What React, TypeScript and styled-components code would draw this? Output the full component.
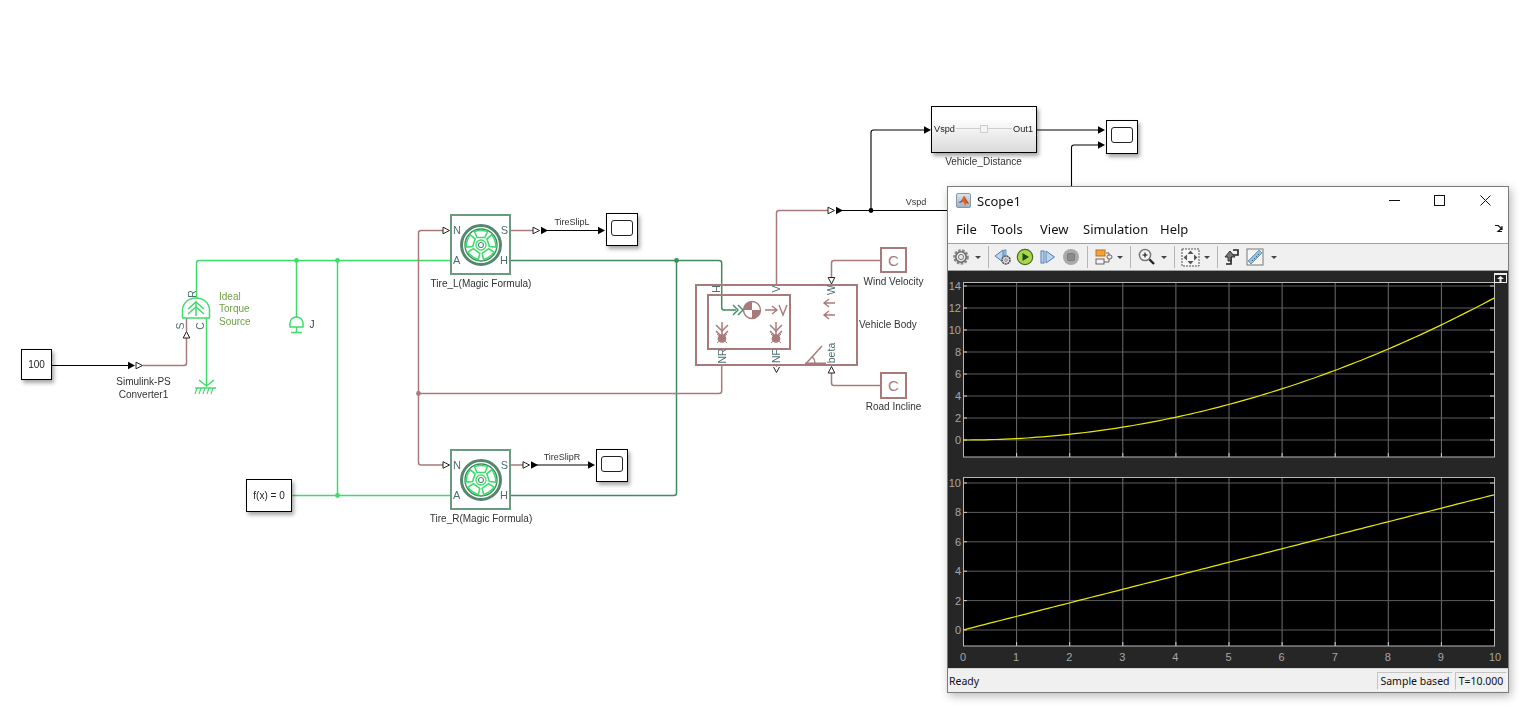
import React from "react";
import styled, { createGlobalStyle } from "styled-components";

// Colours
const BROWN = "#a97a7a";
const GREEN = "#3fdc6c";
const DARK_GREEN = "#3f8c60";
const PORT_TEXT = "#4f6f70";

const GlobalStyle = createGlobalStyle`
  html, body {
    margin: 0;
    background: #fff;
  }
`;

// Canvas
const Canvas = styled.div`
  position: relative;
  width: 1538px;
  height: 716px;
  overflow: hidden;
  background: #fff;
  font-family: "Liberation Sans", Arial, sans-serif;
`;

// the model sheet is soft in the screenshot, the scope window is not
const ModelSheet = styled.div`
  position: absolute;
  inset: 0;
  filter: blur(0.3px);
`;

const WireLayer = styled.svg`
  position: absolute;
  left: 0;
  top: 0;
  width: 1538px;
  height: 716px;
`;

const Wire = styled.path<{ $c?: string; $w?: number }>`
  fill: none;
  stroke: ${(p) => p.$c || "#000"};
  stroke-width: ${(p) => p.$w || 1.5};
`;

const SignalWire = styled(Wire)`
  stroke-width: 1.1;
`;

const DiagramLabel = styled.div<{ $x: number; $y: number; $color?: string; $rot?: boolean; $size?: number }>`
  position: absolute;
  left: ${(p) => p.$x}px;
  top: ${(p) => p.$y}px;
  transform: translate(-50%, -50%) ${(p) => (p.$rot ? "rotate(-90deg)" : "")};
  color: ${(p) => p.$color || "#333"};
  font-size: ${(p) => p.$size || 10}px;
  line-height: 12.5px;
  text-align: center;
  white-space: nowrap;
`;

const LeftLabel = styled(DiagramLabel)`
  transform: translateY(-50%);
  text-align: left;
`;

const Node = styled.div<{ $x: number; $y: number; $w: number; $h: number }>`
  position: absolute;
  left: ${(p) => p.$x}px;
  top: ${(p) => p.$y}px;
  width: ${(p) => p.$w}px;
  height: ${(p) => p.$h}px;
  box-sizing: border-box;
  display: flex;
  align-items: center;
  justify-content: center;
`;

const SimBlock = styled(Node)`
  background: #fff;
  border: 1.5px solid #000;
  box-shadow: 2px 3px 4px rgba(0, 0, 0, 0.35);
  font-size: 10px;
  color: #222;
`;

const ScopeScreen = styled.div`
  width: 20px;
  height: 14px;
  margin-bottom: 4px;
  border: 1.5px solid #222;
  border-radius: 3px;
  background: #fff;
`;

const SubsystemBlock = styled(SimBlock)`
  justify-content: flex-start;
  gap: 1px;
  padding: 0 3px 2px 2px;
  background: linear-gradient(#ffffff 25%, #dadada);
  font-size: 9.2px;
`;

const SliderTrack = styled.div`
  flex: 1;
  height: 1px;
  background: #cfcfcf;
  display: flex;
  align-items: center;
  justify-content: center;
`;

const SliderThumb = styled.div`
  width: 6px;
  height: 6px;
  background: #f4f4f4;
  border: 1px solid #cdcdcd;
`;

const TireBlock = styled(Node)`
  background: #fff;
  border: 2px solid #6a9a80;
`;

const TirePort = styled.span<{ $left?: boolean; $low?: boolean }>`
  position: absolute;
  ${(p) => (p.$left ? "left: 1px;" : "right: 1px;")}
  top: ${(p) => (p.$low ? 38 : 8)}px;
  font-size: 11px;
  line-height: 12px;
  color: ${PORT_TEXT};
`;

const ConstantBlock = styled(Node)`
  background: #fff;
  border: 2px solid ${BROWN};
  color: ${BROWN};
  font-size: 15px;
`;

const BodyFrame = styled(Node)`
  border: 2px solid ${BROWN};
  justify-content: flex-start;
  align-items: flex-start;
  padding: 8px 0 0 10px;
`;

const BodyInner = styled.div`
  width: 84px;
  height: 56px;
  box-sizing: border-box;
  border: 2px solid ${BROWN};
`;

// Scope window
const ScopeWindow = styled.div`
  position: absolute;
  left: 947px;
  top: 186px;
  width: 562px;
  height: 507px;
  box-sizing: border-box;
  display: flex;
  flex-direction: column;
  background: #fff;
  border: 1px solid #7c7c7c;
  box-shadow: 2px 3px 9px rgba(0, 0, 0, 0.28);
  font-family: "Noto Sans", "Open Sans", sans-serif;
  color: #111;
`;

const TitleBar = styled.div`
  height: 29px;
  box-sizing: border-box;
  display: flex;
  align-items: center;
  padding: 0 0 2px 8px;
  font-size: 13px;
  gap: 6px;
`;

const TitleText = styled.span`
  flex: 1;
`;

const WindowButtons = styled.div`
  display: flex;
`;

const WindowButton = styled.div`
  width: 45.5px;
  height: 27px;
  display: flex;
  align-items: center;
  justify-content: center;
`;

const MenuBar = styled.div`
  height: 28px;
  box-sizing: border-box;
  display: flex;
  align-items: center;
  padding: 0 5px 2px 8px;
  font-size: 13px;
  border-bottom: 1px solid #a0a0a0;
`;

const MenuItem = styled.span<{ $w: number }>`
  width: ${(p) => p.$w}px;
`;

const MenuSpacer = styled.div`
  flex: 1;
`;

const Toolbar = styled.div`
  height: 26px;
  display: flex;
  align-items: center;
  padding-left: 1px;
  background: #f0f0f0;
  border-bottom: 1px solid #a0a0a0;
`;

const ToolButton = styled.div<{ $w?: number }>`
  width: ${(p) => p.$w || 23}px;
  height: 22px;
  display: flex;
  align-items: center;
  justify-content: center;
`;

const Caret = styled.div`
  width: 0;
  height: 0;
  margin: 0 3px 0 2.5px;
  border-left: 3px solid transparent;
  border-right: 3px solid transparent;
  border-top: 3px solid #444;
`;

const ToolSep = styled.div`
  width: 1px;
  height: 22px;
  margin: 0 4px;
  background: #b5b5b5;
`;

const PlotArea = styled.div`
  position: relative;
  flex: 1;
  display: flex;
  flex-direction: column;
  gap: 20px;
  padding: 11px 0 0 15px;
  background: #262626;
`;

const UndockButton = styled.div`
  position: absolute;
  right: 1px;
  top: 2px;
  width: 13px;
  height: 10px;
  box-sizing: border-box;
  border: 1px solid #eee;
  border-top-width: 2px;
  background: #222;
  display: flex;
  align-items: center;
  justify-content: center;
`;

const AxesSvg = styled.svg`
  display: block;
  overflow: visible;
  background: #000;
`;

const TickText = styled.text`
  fill: #a6a6a6;
  font-family: "Liberation Sans", Arial, sans-serif;
  font-size: 11px;
`;

const StatusBar = styled.div`
  height: 23px;
  display: flex;
  align-items: center;
  gap: 2px;
  padding: 0 1px;
  background: #f0f0f0;
  border-top: 1px solid #d5d5d5;
  font-size: 10.5px;
`;

const StatusText = styled.span`
  flex: 1;
`;

const StatusCell = styled.div<{ $w: number }>`
  width: ${(p) => p.$w}px;
  height: 18px;
  box-sizing: border-box;
  display: flex;
  align-items: center;
  justify-content: center;
  border: 1px solid #c4c4c4;
  border-right-color: #f8f8f8;
  border-bottom-color: #f8f8f8;
`;

// Small pieces of the diagram
function FilledArrow({ x, y }: { x: number; y: number }) {
  return <polygon points={`${x},${y - 3.7} ${x + 7},${y} ${x},${y + 3.7}`} fill="#000" />;
}

function HollowArrow({ x, y }: { x: number; y: number }) {
  return <polygon points={`${x},${y - 3.3} ${x + 6.5},${y} ${x},${y + 3.3}`} fill="#fff" stroke="#222" strokeWidth="1" />;
}

function HollowUp({ x, y }: { x: number; y: number }) {
  return <polygon points={`${x - 3.3},${y + 6.5} ${x},${y} ${x + 3.3},${y + 6.5}`} fill="#fff" stroke="#222" strokeWidth="1" />;
}

function HollowDown({ x, y }: { x: number; y: number }) {
  return <polygon points={`${x - 3.3},${y} ${x},${y + 6.5} ${x + 3.3},${y}`} fill="#fff" stroke="#222" strokeWidth="1" />;
}

function Dot({ x, y, c }: { x: number; y: number; c: string }) {
  return <circle cx={x} cy={y} r="2.4" fill={c} />;
}

function ForceGlyph({ x }: { x: number }) {
  return (
    <g stroke={BROWN} fill="none" strokeWidth="1.5">
      <path d={`M${x},322 V336`} />
      <path d={`M${x - 6},325 L${x},331 L${x + 6},325`} />
      <path d={`M${x - 6},331 L${x},337 L${x + 6},331`} />
      <circle cx={x} cy={338.5} r="3.6" fill={BROWN} />
      <path d={`M${x - 5},343 L${x + 5},334 M${x + 5},343 L${x - 5},334`} strokeWidth="1" />
    </g>
  );
}

function Wires() {
  return (
    <WireLayer viewBox="0 0 1538 716">
      {/* signal input */}
      <SignalWire d="M52,365.5 H130" />
      <FilledArrow x={128} y={365.5} />
      <HollowArrow x={136} y={365.5} />
      <Wire $c={BROWN} d="M143,365.5 H184 Q186.5,365.5 186.5,363 V338" />
      <HollowUp x={186.5} y={331.5} />
      <Wire $c={BROWN} d="M186.5,331 V318" />

      {/* torque source */}
      <g stroke={GREEN} strokeWidth="1.5" fill="none">
        <path d="M182.5,318 V310 A13.5,12 0 0 1 209.5,310 V318 Z" />
        <path d="M196,316 V301" />
        <path d="M188,309 L196,302 L204,309" />
        <path d="M188,314 L196,307 L204,314" />
        <path d="M206.5,318 V387" />
        <path d="M199,380 Q206,386 206.5,385 Q207,386 214,380" />
        <path d="M195,388 H216" />
        <path d="M197,388 L195,394 M201,388 L199,394 M205,388 L203,394 M209,388 L207,394 M213,388 L211,394" strokeWidth="1.1" />
      </g>

      {/* mechanical rotational net */}
      <Wire $c={GREEN} d="M196.5,298 V263 Q196.5,260.5 199,260.5 H451" />
      <Wire $c={GREEN} d="M337.5,260.5 V495.5" />
      <Wire $c={GREEN} d="M292,495.5 H451" />
      <Wire $c={GREEN} d="M296.5,260.5 V317" />
      <Dot x={296.5} y={260.5} c={GREEN} />
      <Dot x={337.5} y={260.5} c={GREEN} />
      <Dot x={337.5} y={495.5} c={GREEN} />
      <g stroke={GREEN} strokeWidth="1.5" fill="none">
        <path d="M290,327 V323 A6.5,6 0 0 1 303,323 V327 Z" />
        <path d="M296.5,327 V332 M291,332.5 H302" />
      </g>

      {/* hub net */}
      <Wire $c={DARK_GREEN} d="M511,260.5 H719 Q721.7,260.5 721.7,263 V307.5 Q721.7,310 724,310 H736" />
      <Wire $c={DARK_GREEN} d="M676.5,260.5 V493 Q676.5,495.5 674,495.5 H511" />
      <Dot x={676.5} y={260.5} c={DARK_GREEN} />

      {/* normal force net */}
      <Wire $c={BROWN} d="M443,230.5 H421 Q418.5,230.5 418.5,233 V462.5 Q418.5,465 421,465 H443" />
      <Wire $c={BROWN} d="M418.5,393.5 H719 Q721.7,393.5 721.7,391 V365" />
      <Dot x={418.5} y={393.5} c={BROWN} />
      <HollowArrow x={443} y={230.5} />
      <HollowArrow x={443} y={465} />

      {/* tire slip outputs */}
      <Wire $c={BROWN} d="M511,230.5 H533" />
      <HollowArrow x={533} y={230.5} />
      <FilledArrow x={541} y={230.5} />
      <SignalWire d="M546,230.5 H600" />
      <FilledArrow x={598} y={230.5} />
      <Wire $c={BROWN} d="M511,465 H523" />
      <HollowArrow x={523} y={465} />
      <FilledArrow x={531} y={465} />
      <SignalWire d="M536,465 H590" />
      <FilledArrow x={588} y={465} />

      {/* vehicle speed */}
      <Wire $c={BROWN} d="M776.5,285 V213 Q776.5,210.5 779,210.5 H828" />
      <HollowArrow x={828} y={210.5} />
      <FilledArrow x={836} y={210.5} />
      <SignalWire d="M841,210.5 H948" />
      <SignalWire d="M871,210.5 V132.5 Q871,130 873.5,130 H926" />
      <Dot x={871} y={210.5} c="#000" />
      <FilledArrow x={924} y={130} />
      <SignalWire d="M1037,130 H1100" />
      <FilledArrow x={1098} y={130} />
      <SignalWire d="M1071.5,190 V147.5 Q1071.5,145 1074,145 H1100" />
      <FilledArrow x={1098} y={145} />

      {/* wind and incline */}
      <Wire $c={BROWN} d="M881,260.5 H834 Q831.5,260.5 831.5,263 V277" />
      <HollowDown x={831.5} y={277.5} />
      <Wire $c={BROWN} d="M881,385.5 H834 Q831.5,385.5 831.5,383 V372" />
      <HollowUp x={831.5} y={366.5} />
      <path d="M773.5,367 L776.5,372.5 L779.5,367" fill="none" stroke="#222" />
      <path d="M776.5,365 V367" stroke={BROWN} />

      {/* vehicle body glyphs */}
      <g fill="none" stroke={DARK_GREEN} strokeWidth="1.4">
        <path d="M733,305 L738,310 L733,315" />
        <path d="M738,305 L743,310 L738,315" />
      </g>
      <circle cx="752" cy="310" r="8.5" fill="#fff" stroke={BROWN} strokeWidth="1.4" />
      <path d="M752,310 V301.5 A8.5,8.5 0 0 0 743.5,310 Z M752,310 V318.5 A8.5,8.5 0 0 0 760.5,310 Z" fill={BROWN} />
      <g fill="none" stroke={BROWN} strokeWidth="1.4">
        <path d="M765,310 H777 M772,306 L777,310 L772,314" />
        <path d="M779,305 L783,315 L787,305" />
        <path d="M835,303 H824 M829,299 L824,303 L829,307" />
        <path d="M835,315 H824 M829,311 L824,315 L829,319" />
        <path d="M806,363.5 L822,346" />
        <path d="M815,363 A9,9 0 0 0 812,356.5" />
      </g>
      <path d="M805,362.5 H826 V365 H805 Z" fill={BROWN} />
      <ForceGlyph x={722} />
      <ForceGlyph x={776} />
    </WireLayer>
  );
}

function Wheel() {
  const spokes = [0, 72, 144, 216, 288];
  return (
    <svg width="44" height="44" viewBox="-22 -22 44 44">
      <circle r="19.5" fill="none" stroke="#55876f" strokeWidth="3" />
      <circle r="16" fill="none" stroke={DARK_GREEN} strokeWidth="1.4" />
      {spokes.map((a) => (
        <path key={a} d="M-4,-7.5 L4,-7.5 L6.5,-13.5 Q0,-15.5 -6.5,-13.5 Z" fill="none" stroke={GREEN} strokeWidth="1.6" transform={`rotate(${a})`} />
      ))}
      <circle r="5" fill="none" stroke={GREEN} strokeWidth="1.3" />
      <circle r="2.5" fill="none" stroke="#5d9078" strokeWidth="1.2" />
    </svg>
  );
}

function Tire({ x, y }: { x: number; y: number }) {
  return (
    <TireBlock $x={x} $y={y} $w={61} $h={61}>
      <Wheel />
      <TirePort $left>N</TirePort>
      <TirePort>S</TirePort>
      <TirePort $left $low>A</TirePort>
      <TirePort $low>H</TirePort>
    </TireBlock>
  );
}

function ScopeBlock({ x, y, w, h }: { x: number; y: number; w: number; h: number }) {
  return (
    <SimBlock $x={x} $y={y} $w={w} $h={h}>
      <ScopeScreen />
    </SimBlock>
  );
}

// Toolbar drawings
function MatlabIcon() {
  return (
    <svg width="15" height="15" viewBox="0 0 15 15">
      <defs>
        <linearGradient id="frame" x1="0" y1="0" x2="0" y2="1">
          <stop offset="0" stopColor="#dfe6ee" />
          <stop offset="1" stopColor="#9fb0c4" />
        </linearGradient>
      </defs>
      <rect x="0.5" y="0.5" width="14" height="14" rx="1.5" fill="url(#frame)" stroke="#8a97a8" />
      <path d="M2,9.5 L5,8 L8,2.5 L10,6 L13,11 L11,10 L9,12.5 L7.5,9 L5,9.5 Z" fill="#e2621b" />
      <path d="M2,9.5 L5,8 L7,6 L5.5,9.5 Z" fill="#3d79b8" />
      <path d="M8,2.5 L10,6 L13,11 L11,10 Z" fill="#c63c12" />
    </svg>
  );
}

function GearIcon() {
  return (
    <svg width="18" height="18" viewBox="0 0 18 18">
      <circle cx="9" cy="9" r="6.6" fill="none" stroke="#8a8a8a" strokeWidth="2.4" strokeDasharray="2.6 1.4" />
      <circle cx="9" cy="9" r="5.2" fill="none" stroke="#6c6c6c" strokeWidth="1.6" />
      <circle cx="9" cy="9" r="2.6" fill="#e8e8e8" stroke="#777" />
    </svg>
  );
}

function StepBackIcon() {
  return (
    <svg width="20" height="20" viewBox="0 0 20 20">
      <path d="M10,3 L2,9 L10,15 Z" fill="#bcd4ee" stroke="#4d7fb8" />
      <rect x="11" y="3" width="2" height="11" fill="#bcd4ee" stroke="#4d7fb8" strokeWidth="0.8" />
      <circle cx="13" cy="13" r="4" fill="#ddd" stroke="#555" strokeWidth="1.6" strokeDasharray="2 0.7" />
      <circle cx="13" cy="13" r="1.3" fill="#fff" stroke="#555" strokeWidth="0.7" />
    </svg>
  );
}

function PlayIcon() {
  return (
    <svg width="18" height="18" viewBox="0 0 18 18">
      <circle cx="9" cy="9" r="7.7" fill="#a8d84a" stroke="#4a6a32" strokeWidth="1.2" />
      <path d="M6.5,5 L13,9 L6.5,13 Z" fill="#24461c" />
    </svg>
  );
}

function StepForwardIcon() {
  return (
    <svg width="18" height="18" viewBox="0 0 18 18">
      <rect x="2" y="3" width="3" height="12" fill="#bcd4ee" stroke="#4d7fb8" />
      <path d="M7,3 L15.5,9 L7,15 Z" fill="#bcd4ee" stroke="#4d7fb8" />
    </svg>
  );
}

function StopIcon() {
  return (
    <svg width="18" height="18" viewBox="0 0 18 18">
      <circle cx="9" cy="9" r="8" fill="#a9a9a9" />
      <rect x="5.5" y="5.5" width="7" height="7" rx="1" fill="#8a8a8a" stroke="#7a7a7a" />
    </svg>
  );
}

function BlocksIcon() {
  return (
    <svg width="20" height="18" viewBox="0 0 20 18">
      <path d="M13,5 H16 V8 M11,14 H16 V11" fill="none" stroke="#666" />
      <rect x="3" y="2" width="9" height="6" fill="#f2a23c" stroke="#c46d1a" />
      <rect x="3" y="11" width="8" height="5" fill="#f4f4f4" stroke="#666" />
      <rect x="14" y="7" width="5" height="4" rx="2" fill="#eee" stroke="#666" />
    </svg>
  );
}

function ZoomIcon() {
  return (
    <svg width="18" height="18" viewBox="0 0 18 18">
      <path d="M10.5,10.5 L16,16" stroke="#222" strokeWidth="2.4" />
      <circle cx="7" cy="7" r="5.6" fill="#f4f4f4" stroke="#777" strokeWidth="1.5" />
      <path d="M4.5,7 H9.5 M7,4.5 V9.5" stroke="#111" strokeWidth="1.1" />
    </svg>
  );
}

function FitIcon() {
  return (
    <svg width="19" height="19" viewBox="0 0 19 19">
      <rect x="1" y="1" width="17" height="17" fill="#f6f6f6" stroke="#555" strokeDasharray="2 1" />
      <path d="M9.5,2.5 L6.5,6 H12.5 Z M9.5,16.5 L6.5,13 H12.5 Z M2.5,9.5 L6,6.5 V12.5 Z M16.5,9.5 L13,6.5 V12.5 Z" fill="#555" />
    </svg>
  );
}

function StepUpIcon() {
  return (
    <svg width="18" height="18" viewBox="0 0 18 18">
      <path d="M3,16 H8 V7 H15 V2 H10" fill="none" stroke="#222" strokeWidth="1.6" />
      <path d="M7,3 L2,9 H5 V13 H8 V9 H12 Z" fill="#777" stroke="#222" strokeWidth="0.9" />
    </svg>
  );
}

function RulerIcon() {
  return (
    <svg width="18" height="18" viewBox="0 0 18 18">
      <rect x="1" y="1" width="16" height="16" fill="#f6f6f6" stroke="#777" />
      <path d="M2,13 L13,2 L16,5 L5,16 Z" fill="#8fc0e0" stroke="#4d7da0" strokeWidth="0.7" />
      <path d="M6,12 L7,13 M8,10 L9,11 M10,8 L11,9 M12,6 L13,7" stroke="#33506a" strokeWidth="0.8" />
    </svg>
  );
}

// Axes
const AXES_W = 531;
const X_TICKS = [0, 1, 2, 3, 4, 5, 6, 7, 8, 9, 10];

interface AxesProps {
  h: number;
  zero: number;
  unit: number;
  yTicks: number[];
  value: (t: number) => number;
  showX?: boolean;
}

function Axes({ h, zero, unit, yTicks, value, showX }: AxesProps) {
  const sx = (t: number) => (t * AXES_W) / 10;
  const sy = (v: number) => zero - v * unit;
  const points = Array.from({ length: 101 }, (_, i) => i / 10)
    .map((t) => `${sx(t).toFixed(1)},${sy(value(t)).toFixed(1)}`)
    .join(" ");

  return (
    <AxesSvg width={AXES_W} height={h} viewBox={`0 0 ${AXES_W} ${h}`}>
      {X_TICKS.map((t) => (
        <g key={t}>
          <path d={`M${sx(t) + 0.5},0 V${h}`} stroke="#6f6f6f" strokeWidth="1" />
          <path d={`M${sx(t) + 0.5},${h} v-4`} stroke="#cfcfcf" strokeWidth="1" />
          {showX && (
            <TickText x={t === 10 ? sx(t) + 1 : sx(t)} y={h + 15} textAnchor="middle">
              {t}
            </TickText>
          )}
        </g>
      ))}
      {yTicks.map((v) => (
        <g key={v}>
          <path d={`M0,${sy(v)} H${AXES_W}`} stroke="#5c5c5c" strokeWidth="1" />
          <path d={`M0,${sy(v)} h4 M${AXES_W},${sy(v)} h-4`} stroke="#cfcfcf" strokeWidth="1" />
          <TickText x="-2" y={sy(v) + 4} textAnchor="end">
            {v}
          </TickText>
        </g>
      ))}
      <rect x="0.5" y="0.5" width={AXES_W} height={h - 0.5} fill="none" stroke="#b8b8b8" strokeWidth="1" />
      <polyline points={points} fill="none" stroke="#e8e800" strokeWidth="1.2" />
    </AxesSvg>
  );
}

function Scope() {
  return (
    <ScopeWindow>
      <TitleBar>
        <MatlabIcon />
        <TitleText>Scope1</TitleText>
        <WindowButtons>
          <WindowButton>
            <svg width="11" height="11" viewBox="0 0 11 11">
              <path d="M0,5.5 H11" stroke="#111" />
            </svg>
          </WindowButton>
          <WindowButton>
            <svg width="11" height="11" viewBox="0 0 11 11">
              <rect x="0.5" y="0.5" width="10" height="10" fill="none" stroke="#111" />
            </svg>
          </WindowButton>
          <WindowButton>
            <svg width="11" height="11" viewBox="0 0 11 11">
              <path d="M0.5,0.5 L10.5,10.5 M10.5,0.5 L0.5,10.5" stroke="#111" />
            </svg>
          </WindowButton>
        </WindowButtons>
      </TitleBar>
      <MenuBar>
        <MenuItem $w={35}>File</MenuItem>
        <MenuItem $w={49}>Tools</MenuItem>
        <MenuItem $w={43}>View</MenuItem>
        <MenuItem $w={77}>Simulation</MenuItem>
        <MenuItem $w={40}>Help</MenuItem>
        <MenuSpacer />
        <svg width="8" height="7" viewBox="0 0 8 7">
          <path d="M0,0.5 H3 L7,4 V1 M7,6.5 H3 L7,3" fill="none" stroke="#111" strokeWidth="1.2" />
        </svg>
      </MenuBar>
      <Toolbar>
        <ToolButton><GearIcon /></ToolButton>
        <Caret />
        <ToolSep />
        <ToolButton $w={21}><StepBackIcon /></ToolButton>
        <ToolButton><PlayIcon /></ToolButton>
        <ToolButton><StepForwardIcon /></ToolButton>
        <ToolButton><StopIcon /></ToolButton>
        <ToolSep />
        <ToolButton><BlocksIcon /></ToolButton>
        <Caret />
        <ToolSep />
        <ToolButton><ZoomIcon /></ToolButton>
        <Caret />
        <ToolSep />
        <ToolButton><FitIcon /></ToolButton>
        <Caret />
        <ToolSep />
        <ToolButton $w={20}><StepUpIcon /></ToolButton>
        <ToolButton $w={26}><RulerIcon /></ToolButton>
        <Caret />
      </Toolbar>
      <PlotArea>
        <UndockButton>
          <svg width="7" height="6" viewBox="0 0 7 6">
            <path d="M3.5,0 L7,3 H4.5 V6 H2.5 V3 H0 Z" fill="#eee" />
          </svg>
        </UndockButton>
        <Axes h={175} zero={158} unit={11} yTicks={[0, 2, 4, 6, 8, 10, 12, 14]} value={(t) => 0.129 * t * t} />
        <Axes h={169} zero={153} unit={14.7} yTicks={[0, 2, 4, 6, 8, 10]} value={(t) => 0.92 * t} showX />
      </PlotArea>
      <StatusBar>
        <StatusText>Ready</StatusText>
        <StatusCell $w={76}>Sample based</StatusCell>
        <StatusCell $w={52}>T=10.000</StatusCell>
      </StatusBar>
    </ScopeWindow>
  );
}

export default function App() {
  return (
    <Canvas>
      <GlobalStyle />
      <ModelSheet>
        <Wires />

        <SimBlock $x={21} $y={349} $w={31} $h={31}>100</SimBlock>
        <DiagramLabel $x={143.5} $y={388}>Simulink-PS<br />Converter1</DiagramLabel>
        <SimBlock $x={246} $y={479} $w={46} $h={33}>f(x) = 0</SimBlock>

        <DiagramLabel $x={192} $y={294} $size={10.5} $color={PORT_TEXT} $rot>R</DiagramLabel>
        <DiagramLabel $x={180} $y={326} $size={10.5} $color={PORT_TEXT} $rot>S</DiagramLabel>
        <DiagramLabel $x={200} $y={326} $size={10.5} $color={PORT_TEXT} $rot>C</DiagramLabel>
        <LeftLabel $x={219} $y={309.5} $color="#6f9f45">Ideal<br />Torque<br />Source</LeftLabel>
        <DiagramLabel $x={312} $y={325}>J</DiagramLabel>

        <Tire x={450} y={214} />
        <DiagramLabel $x={481} $y={284}>Tire_L(Magic Formula)</DiagramLabel>
        <DiagramLabel $x={572} $y={222} $size={9}>TireSlipL</DiagramLabel>
        <ScopeBlock x={606} y={213} w={32} h={33} />

        <Tire x={450} y={449} />
        <DiagramLabel $x={481} $y={519}>Tire_R(Magic Formula)</DiagramLabel>
        <DiagramLabel $x={562} $y={457} $size={9}>TireSlipR</DiagramLabel>
        <ScopeBlock x={596} y={449} w={32} h={33} />

        <BodyFrame $x={695} $y={284} $w={163} $h={82}>
          <BodyInner />
        </BodyFrame>
        <DiagramLabel $x={716} $y={289} $size={10.5} $color={PORT_TEXT} $rot>H</DiagramLabel>
        <DiagramLabel $x={776} $y={289} $size={10.5} $color={PORT_TEXT} $rot>V</DiagramLabel>
        <DiagramLabel $x={831} $y={290} $size={10.5} $color={PORT_TEXT} $rot>W</DiagramLabel>
        <DiagramLabel $x={722} $y={356} $size={10.5} $color={PORT_TEXT} $rot>NR</DiagramLabel>
        <DiagramLabel $x={776} $y={356} $size={10.5} $color={PORT_TEXT} $rot>NF</DiagramLabel>
        <DiagramLabel $x={831} $y={353} $size={10.5} $color={PORT_TEXT} $rot>beta</DiagramLabel>
        <LeftLabel $x={859} $y={324.5}>Vehicle Body</LeftLabel>

        <ConstantBlock $x={880} $y={247} $w={27} $h={26}>C</ConstantBlock>
        <DiagramLabel $x={893.5} $y={281.5}>Wind Velocity</DiagramLabel>
        <ConstantBlock $x={880} $y={372} $w={27} $h={27}>C</ConstantBlock>
        <DiagramLabel $x={893.5} $y={406.5}>Road Incline</DiagramLabel>

        <SubsystemBlock $x={931} $y={106} $w={106} $h={47}>
          Vspd
          <SliderTrack>
            <SliderThumb />
          </SliderTrack>
          Out1
        </SubsystemBlock>
        <DiagramLabel $x={983.5} $y={161.5}>Vehicle_Distance</DiagramLabel>
        <DiagramLabel $x={916} $y={201.5} $size={9}>Vspd</DiagramLabel>
        <ScopeBlock x={1106} y={120} w={32} h={34} />
      </ModelSheet>

      <Scope />
    </Canvas>
  );
}
